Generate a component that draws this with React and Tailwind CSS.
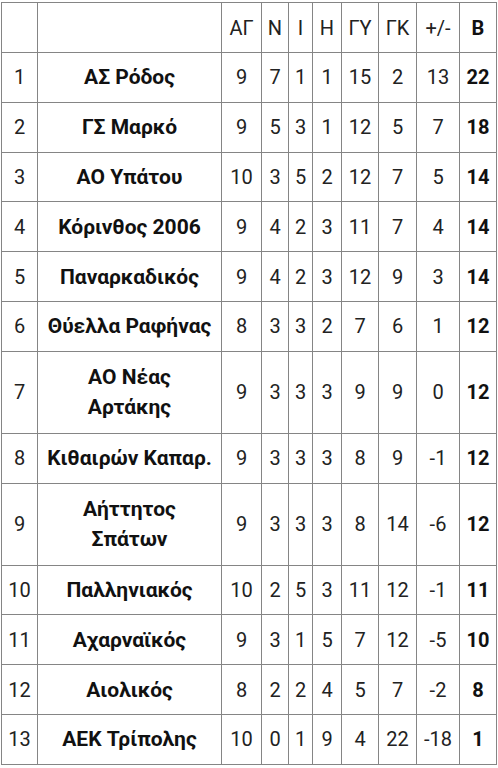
import React from 'react';

const rows = [
  [1, 'ΑΣ Ρόδος', 9, 7, 1, 1, 15, 2, 13, 22],
  [2, 'ΓΣ Μαρκό', 9, 5, 3, 1, 12, 5, 7, 18],
  [3, 'ΑΟ Υπάτου', 10, 3, 5, 2, 12, 7, 5, 14],
  [4, 'Κόρινθος 2006', 9, 4, 2, 3, 11, 7, 4, 14],
  [5, 'Παναρκαδικός', 9, 4, 2, 3, 12, 9, 3, 14],
  [6, 'Θύελλα Ραφήνας', 8, 3, 3, 2, 7, 6, 1, 12],
  [7, ['ΑΟ Νέας', 'Αρτάκης'], 9, 3, 3, 3, 9, 9, 0, 12],
  [8, 'Κιθαιρών Καπαρ.', 9, 3, 3, 3, 8, 9, -1, 12],
  [9, ['Αήττητος', 'Σπάτων'], 9, 3, 3, 3, 8, 14, -6, 12],
  [10, 'Παλληνιακός', 10, 2, 5, 3, 11, 12, -1, 11],
  [11, 'Αχαρναϊκός', 9, 3, 1, 5, 7, 12, -5, 10],
  [12, 'Αιολικός', 8, 2, 2, 4, 5, 7, -2, 8],
  [13, 'ΑΕΚ Τρίπολης', 10, 0, 1, 9, 4, 22, -18, 1],
];

const widths = [36, 184, 40, 27, 24, 29, 37, 38, 43, 37];
const headers = ['', '', 'ΑΓ', 'Ν', 'Ι', 'Η', 'ΓΥ', 'ΓΚ', '+/-', 'Β'];

const cell = 'border border-[#858585] text-center align-middle p-0';

export default function App() {
  return (
    <div className="min-h-[768px] bg-white pt-[2px] pl-[1px] font-['Roboto',sans-serif] text-[20px] leading-[30px] text-[#222]">
      <table className="table-fixed border-collapse w-[495px]">
        <colgroup>
          {widths.map((w, i) => (
            <col key={i} style={{ width: w }} />
          ))}
        </colgroup>
        <thead>
          <tr className="h-[50px]">
            {headers.map((h, i) => (
              <th key={i} className={`${cell} ${i === 9 ? 'font-bold text-[#111]' : 'font-normal'}`}>
                {h}
              </th>
            ))}
          </tr>
        </thead>
        <tbody>
          {rows.map((r) => {
            const double = Array.isArray(r[1]);
            return (
              <tr key={r[0]} className={double ? 'h-[82px]' : 'h-[49.8px]'}>
                <td className={cell}>{r[0]}</td>
                <td className={`${cell} font-bold text-[21px] text-[#111]`}>
                  {double ? (
                    <>
                      {r[1][0]}
                      <br />
                      {r[1][1]}
                    </>
                  ) : (
                    r[1]
                  )}
                </td>
                {r.slice(2, 9).map((v, i) => (
                  <td key={i} className={cell}>
                    {v}
                  </td>
                ))}
                <td className={`${cell} font-bold text-[#111]`}>{r[9]}</td>
              </tr>
            );
          })}
        </tbody>
      </table>
    </div>
  );
}
